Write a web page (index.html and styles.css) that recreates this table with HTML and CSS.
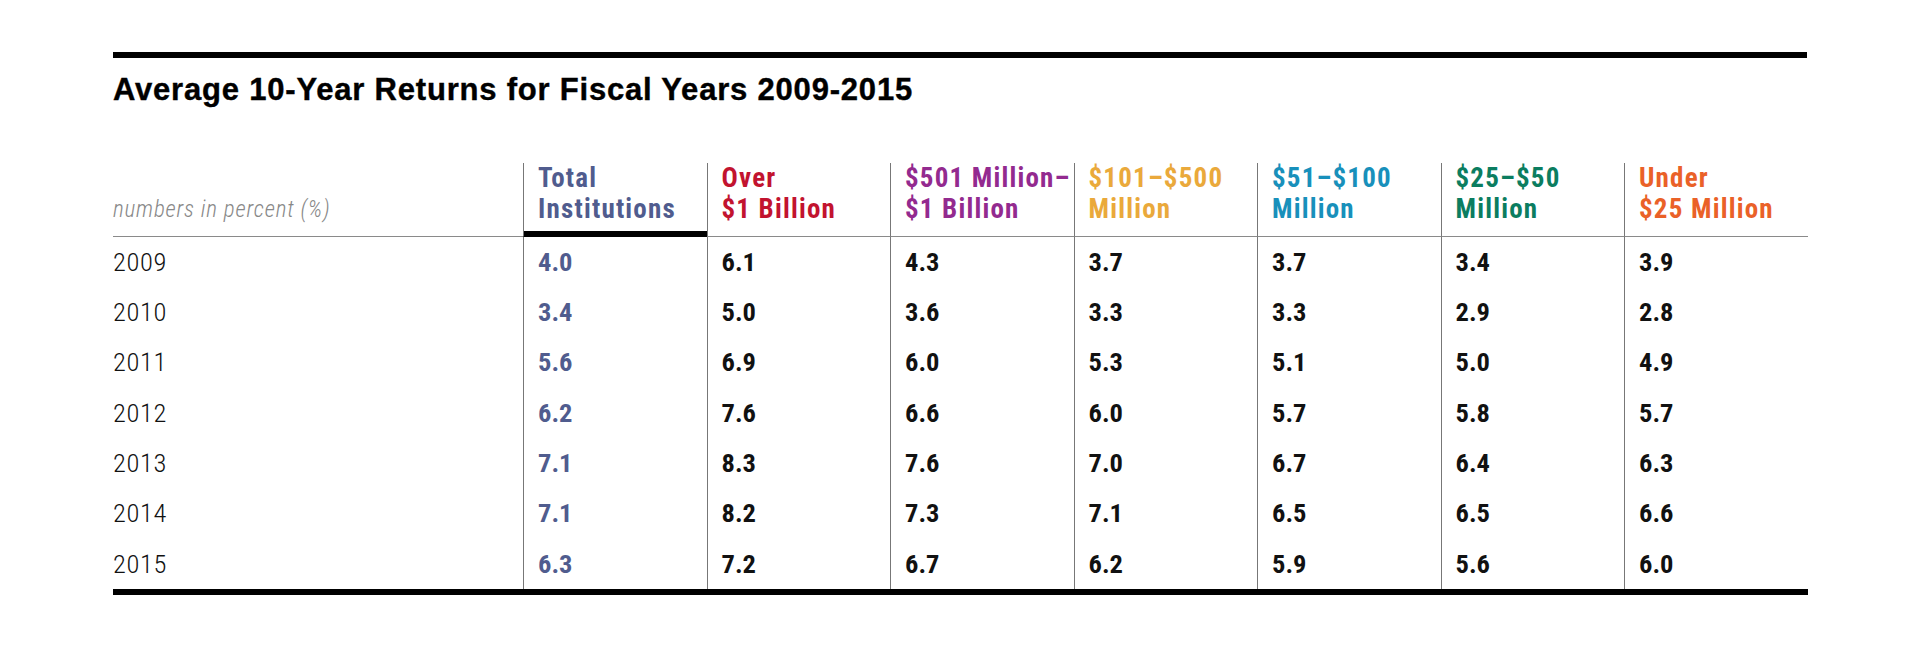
FILE: index.html
```html
<!DOCTYPE html>
<html lang="en">
<head>
<meta charset="utf-8">
<title>Average 10-Year Returns</title>
<link rel="stylesheet" href="styles.css">
</head>
<body>
<div class="report">
  <div class="rule-top"></div>
  <h1 class="title">Average 10-Year Returns for Fiscal Years 2009-2015</h1>
  <table class="returns">
    <colgroup>
      <col class="col-label">
      <col class="col-data"><col class="col-data"><col class="col-data"><col class="col-data"><col class="col-data"><col class="col-data"><col class="col-data">
    </colgroup>
    <thead>
      <tr>
        <th class="label">numbers in percent (%)</th>
        <th class="h-total">Total<br>Institutions</th>
        <th class="h-over1b">Over<br>$1 Billion</th>
        <th class="h-501m">$501 Million–<br>$1 Billion</th>
        <th class="h-101m">$101–$500<br>Million</th>
        <th class="h-51m">$51–$100<br>Million</th>
        <th class="h-25m">$25–$50<br>Million</th>
        <th class="h-under">Under<br>$25 Million</th>
      </tr>
    </thead>
    <tbody>
      <tr><td class="year">2009</td><td class="total">4.0</td><td>6.1</td><td>4.3</td><td>3.7</td><td>3.7</td><td>3.4</td><td>3.9</td></tr>
      <tr><td class="year">2010</td><td class="total">3.4</td><td>5.0</td><td>3.6</td><td>3.3</td><td>3.3</td><td>2.9</td><td>2.8</td></tr>
      <tr><td class="year">2011</td><td class="total">5.6</td><td>6.9</td><td>6.0</td><td>5.3</td><td>5.1</td><td>5.0</td><td>4.9</td></tr>
      <tr><td class="year">2012</td><td class="total">6.2</td><td>7.6</td><td>6.6</td><td>6.0</td><td>5.7</td><td>5.8</td><td>5.7</td></tr>
      <tr><td class="year">2013</td><td class="total">7.1</td><td>8.3</td><td>7.6</td><td>7.0</td><td>6.7</td><td>6.4</td><td>6.3</td></tr>
      <tr><td class="year">2014</td><td class="total">7.1</td><td>8.2</td><td>7.3</td><td>7.1</td><td>6.5</td><td>6.5</td><td>6.6</td></tr>
      <tr><td class="year">2015</td><td class="total">6.3</td><td>7.2</td><td>6.7</td><td>6.2</td><td>5.9</td><td>5.6</td><td>6.0</td></tr>
    </tbody>
  </table>
</div>
</body>
</html>
```
FILE: styles.css
```css
html, body {
  margin: 0;
  padding: 0;
  background: #ffffff;
}

.report {
  margin: 52px 0 0 113px;
  width: 1694px;
}

.rule-top {
  height: 6px;
  background: #000;
}

.title {
  margin: 15px 0 0 0;
  font-family: "Liberation Sans", Arial, sans-serif;
  font-weight: bold;
  font-size: 31px;
  line-height: 34px;
  letter-spacing: 0.8px;
  -webkit-text-stroke: 0.4px #000;
  color: #000;
}

.returns {
  margin-top: 56px;
  width: 1694px;
  table-layout: fixed;
  border-collapse: separate;
  border-spacing: 0;
  border-bottom: 6px solid #000;
  font-family: Roboto, "Liberation Sans", sans-serif;
  font-stretch: 75%;
}

.col-label { width: 410px; }
.col-data { width: 183.5px; }

.returns th {
  text-align: left;
  vertical-align: bottom;
  font-weight: bold;
  font-size: 27px;
  line-height: 31px;
  letter-spacing: 1.2px;
  padding: 0 8px 11px 14px;
  border-bottom: 1px solid #8a8a8a;
  white-space: nowrap;
}

.returns th.label {
  padding-left: 0;
  font-weight: 300;
  font-style: italic;
  font-size: 23px;
  letter-spacing: 0.8px;
  color: #888;
}

.returns th + th,
.returns td + td {
  border-left: 1px solid #777;
}

.returns th.h-total {
  border-bottom-color: #000;
  box-shadow: inset 0 -5px 0 #000;
}

.h-total { color: #505c8e; }
.h-over1b { color: #c2132f; }
.h-501m { color: #932a8f; }
.h-101m { color: #eaa93b; }
.h-51m { color: #1890bb; }
.h-25m { color: #0b7d60; }
.h-under { color: #ea6128; }

.returns tbody tr {
  height: 50.3px;
}

.returns td {
  padding: 0 8px 0 14px;
  vertical-align: middle;
  font-size: 26.5px;
  line-height: 1;
  font-weight: bold;
  color: #111;
}

.returns td.year {
  padding-left: 0;
  font-weight: 300;
  letter-spacing: 0.6px;
  color: #111;
}

.returns td.total {
  color: #505c8e;
}
```
